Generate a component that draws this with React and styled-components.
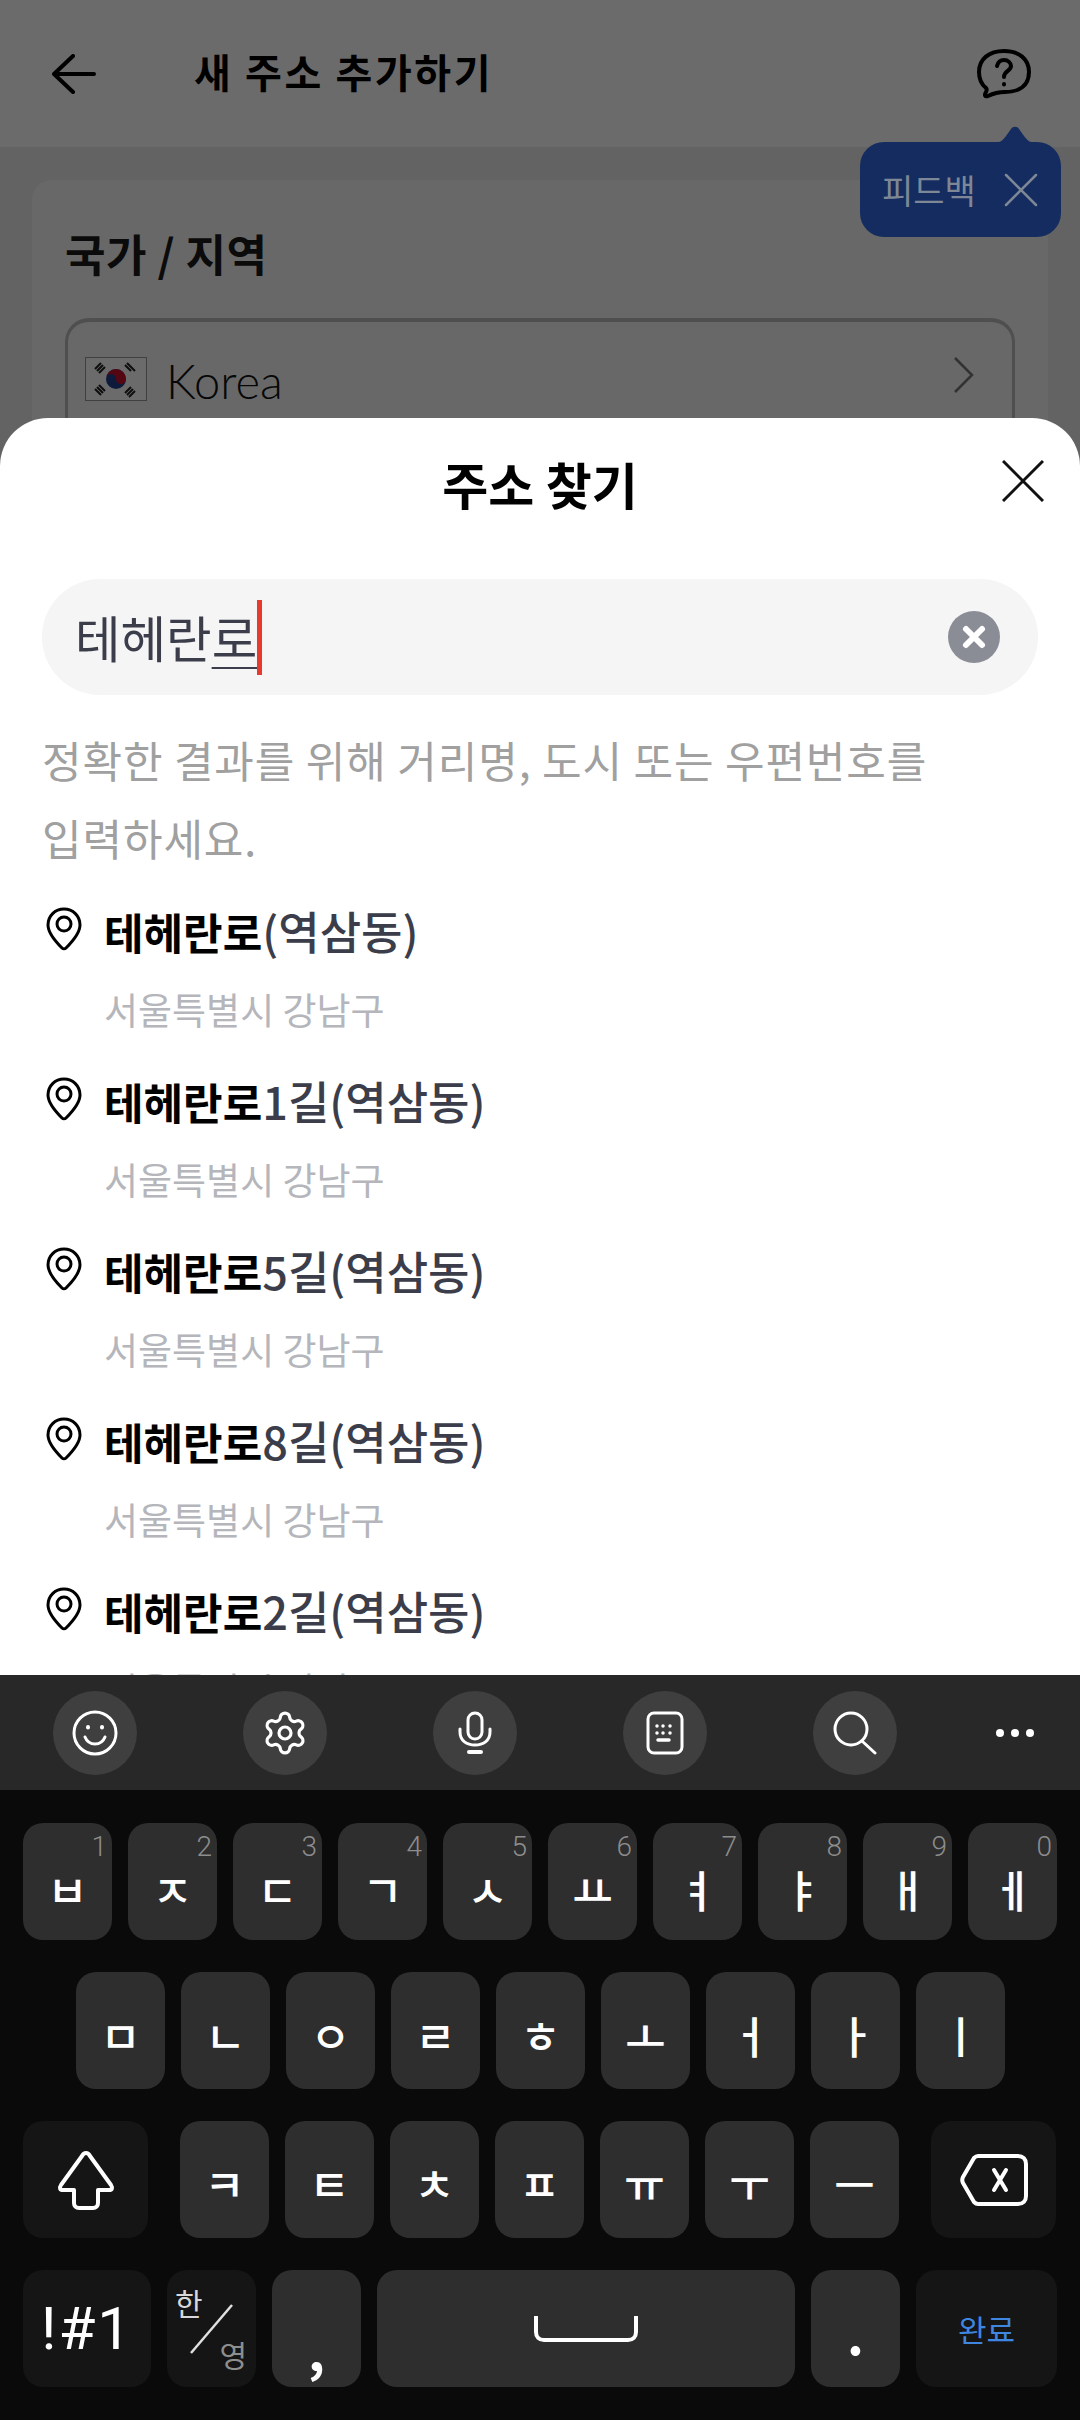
import React from "react";
import styled, { createGlobalStyle } from "styled-components";
import { Settings } from "lucide-react";

const Global = createGlobalStyle`
  html, body { margin: 0; padding: 0; background: #0a0a0a; }
  * { box-sizing: border-box; }
  body { font-family: "Noto Sans CJK KR", "Noto Sans", sans-serif; }
`;

const Screen = styled.div`
  position: relative;
  width: 1080px;
  height: 2420px;
  overflow: hidden;
  background: #ececec;
`;

/* page behind the sheet */
const TopBar = styled.header`
  height: 147px;
  background: #fff;
  display: flex;
  align-items: center;
  padding: 0 48px 0 52px;
`;
const BarTitle = styled.h1`
  margin: -6px 0 0 98px;
  flex: 1;
  font-size: 40px;
  font-weight: 700;
  color: #000;
  letter-spacing: 2.6px;
`;
const Card = styled.section`
  margin: 33px 32px 0;
  height: 600px;
  background: #f8f8f8;
  border-radius: 20px;
  padding: 40px 33px;
`;
const CardTitle = styled.h2`
  margin: 0;
  font-size: 44px;
  line-height: 66px;
  font-weight: 700;
  color: #1b1b1b;
  letter-spacing: 0.5px;
`;
const CountryBox = styled.div`
  margin-top: 32px;
  height: 130px;
  border: 3px solid #bcbcbc;
  border-top-width: 4px;
  border-radius: 24px;
  display: flex;
  align-items: flex-start;
  padding: 35px 38px 0 17px;
  gap: 19px;
`;
const CountryName = styled.span`
  flex: 1;
  font-family: "Lato", sans-serif;
  font-weight: 300;
  font-size: 47px;
  line-height: 48px;
  color: #111;
`;
const Scrim = styled.div`
  position: absolute;
  inset: 0;
  background: rgba(0, 0, 0, 0.58);
`;

const Tooltip = styled.div`
  position: absolute;
  left: 860px;
  top: 142px;
  width: 201px;
  height: 95px;
  background: #142c5f;
  border-radius: 24px;
  display: flex;
  align-items: center;
  padding: 0 23px 0 22px;
  justify-content: space-between;
  color: #7d8796;
  font-size: 34px;
`;
const TooltipTip = styled.svg`
  position: absolute;
  left: 132px;
  top: -17px;
`;

/* bottom sheet + keyboard */
const Overlay = styled.div`
  position: absolute;
  inset: 418px 0 0 0;
  display: flex;
  flex-direction: column;
`;
const Sheet = styled.div`
  flex: 1;
  min-height: 0;
  overflow: hidden;
  background: #fff;
  border-radius: 48px 48px 0 0;
`;
const SheetHead = styled.div`
  height: 138px;
  display: grid;
  grid-template-columns: 1fr auto 1fr;
  align-items: center;
  padding: 0 36px;
`;
const SheetTitle = styled.div`
  grid-column: 2;
  font-size: 50px;
  font-weight: 700;
  color: #000;
  margin-top: -8px;
`;
const CloseIcon = styled.svg`
  justify-self: end;
  margin-top: -12px;
`;
const SearchBox = styled.div`
  margin: 23px 42px 0;
  height: 116px;
  border-radius: 58px;
  background: #f5f5f5;
  display: flex;
  align-items: center;
  padding: 0 38px 0 33px;
`;
const SearchText = styled.span`
  font-size: 49.500px;
  line-height: 60px;
  color: #3b3e4a;
`;
const Composing = styled.span`
  text-decoration: underline;
  text-decoration-thickness: 2px;
  text-underline-offset: 9px;
`;
const Caret = styled.i`
  width: 5px;
  height: 75px;
  background: #e8392f;
  flex: none;
`;
const ClearBtn = styled.svg`
  margin-left: auto;
`;
const Hint = styled.p`
  margin: 25px 42px 0;
  font-size: 43px;
  line-height: 78px;
  color: #a0a0a0;
  letter-spacing: 0.900px;
`;
const Results = styled.ul`
  list-style: none;
  margin: 25px 0 0;
  padding: 0 0 0 46px;
`;
const ResultRow = styled.li`
  display: grid;
  grid-template-columns: 58px 1fr;
  grid-template-rows: 60px 60px;
  row-gap: 19px;
  height: 170px;
`;
const Pin = styled.svg`
  margin-top: 6px;
`;
const ResultName = styled.div`
  font-size: 45px;
  line-height: 60px;
  font-weight: 500;
  color: #3b3e4a;
  white-space: nowrap;
  b {
    font-size: 43px;
    color: #000;
    font-weight: 700;
  }
`;
const ResultArea = styled.div`
  grid-column: 2;
  font-size: 37px;
  line-height: 58px;
  color: #b5b6bb;
`;

const Keyboard = styled.div`
  flex: none;
  height: 745px;
  background: #0a0a0a;
`;
const ToolRow = styled.div`
  height: 115px;
  background: #282828;
  display: flex;
  align-items: center;
  padding: 0 0 0 53px;
  gap: 106px;
`;
const ToolBtn = styled.div`
  flex: none;
  width: 84px;
  height: 84px;
  margin-left: ${({ $plain }) => ($plain ? "-30px" : "0")};
  border-radius: 50%;
  background: ${({ $plain }) => ($plain ? "transparent" : "#3f3f3f")};
  display: flex;
  align-items: center;
  justify-content: center;
  color: #fff;
`;
const KeyArea = styled.div`
  padding-top: 33px;
  display: flex;
  flex-direction: column;
  gap: 32px;
`;
const KeyRow = styled.div`
  display: flex;
  gap: 16px;
  padding-left: ${({ $inset }) => $inset}px;
`;
const Key = styled.div`
  position: relative;
  flex: none;
  width: ${({ $w }) => $w || 89}px;
  height: 117px;
  margin-left: ${({ $ml }) => $ml || 0}px;
  border-radius: 20px;
  background: ${({ $dark }) => ($dark ? "#151515" : "#2e2e2e")};
  color: ${({ $color }) => $color || "#fff"};
  display: flex;
  align-items: center;
  justify-content: center;
  font-size: ${({ $size }) => $size || 44}px;
  font-weight: ${({ $size }) => ($size ? 400 : 500)};
  padding-top: ${({ $pt }) => $pt || 0}px;
`;
const Digit = styled.span`
  position: absolute;
  top: 8px;
  right: 5px;
  font-family: "Roboto", sans-serif;
  font-weight: 300;
  font-size: 28px;
  line-height: 32px;
  color: #8d8d8d;
`;
const SymbolLabel = styled.span`
  font-family: "Roboto", sans-serif;
  letter-spacing: 2px;
`;
const HanLabel = styled.span`
  position: absolute;
  left: 8px;
  top: 15px;
  font-size: 30px;
  line-height: 34px;
  font-weight: 400;
  color: #d8d8d8;
`;
const EngLabel = styled.span`
  position: absolute;
  right: 9px;
  bottom: 16px;
  font-size: 30px;
  line-height: 34px;
  font-weight: 400;
  color: #8e8e8e;
`;
const HanSlash = styled.svg`
  position: absolute;
  left: 22px;
  top: 34px;
`;

const rowOne = [
  ["ㅂ", "1"], ["ㅈ", "2"], ["ㄷ", "3"], ["ㄱ", "4"], ["ㅅ", "5"],
  ["ㅛ", "6"], ["ㅕ", "7"], ["ㅑ", "8"], ["ㅐ", "9"], ["ㅔ", "0"],
];
const rowTwo = ["ㅁ", "ㄴ", "ㅇ", "ㄹ", "ㅎ", "ㅗ", "ㅓ", "ㅏ", "ㅣ"];
const rowThree = ["ㅋ", "ㅌ", "ㅊ", "ㅍ", "ㅠ", "ㅜ", "ㅡ"];
const results = ["(역삼동)", "1길(역삼동)", "5길(역삼동)", "8길(역삼동)", "2길(역삼동)"];

function App() {
  return (
    <Screen>
      <Global />
      <TopBar>
        <svg width="44" height="40" viewBox="0 0 44 40" fill="none" stroke="#000" strokeWidth="4" strokeLinecap="round" strokeLinejoin="round">
          <path d="M21 2 2 20l19 18M3 20h39" />
        </svg>
        <BarTitle>새 주소 추가하기</BarTitle>
        <svg width="56" height="52" viewBox="0 0 56 52" fill="none" stroke="#000" strokeWidth="4" strokeLinecap="round" strokeLinejoin="round">
          <path d="M28 3c15 0 25 8 25 21 0 14-10 20-24 20-5 0-11 1-17 4-3 1-4-1-2-4 1-2 1-3 0-4C5 36 3 31 3 24 3 11 13 3 28 3Z" />
          <path d="M21 18c1-4 4-6 7-6 4 0 7 3 7 6 0 5-7 5-7 11" />
          <path d="M28 36v.5" />
        </svg>
      </TopBar>
      <Card>
        <CardTitle>국가 / 지역</CardTitle>
        <CountryBox>
          <svg width="62" height="44" viewBox="0 0 62 44">
            <rect x="0.5" y="0.5" width="61" height="43" fill="#fff" stroke="#999" />
            <circle cx="31" cy="22" r="10" fill="#1f3f8f" />
            <path d="M21 22a10 10 0 0 1 20 0c0 3-2.500 5-5 5s-5-2-5-5-2.500-5-5-5-5 2-5 5Z" fill="#c8102e" />
            <g stroke="#222" strokeWidth="2">
              <path d="M10 12 16 6M12 14 18 8M14 16 20 10" />
              <path d="M42 6 48 12M44 8 50 14M40 8 46 14" />
              <path d="M10 32 16 38M12 30 18 36M14 28 20 34" />
              <path d="M42 38 48 32M44 40 50 34M40 36 46 30" />
            </g>
          </svg>
          <CountryName>Korea</CountryName>
          <svg width="20" height="36" viewBox="0 0 20 36" fill="none" stroke="#777" strokeWidth="2.500">
            <path d="M1 1 18 18 1 35" />
          </svg>
        </CountryBox>
      </Card>
      <Scrim />
      <Tooltip>
        <TooltipTip width="46" height="18" viewBox="0 0 46 18">
          <path d="M0 18c8 0 10-2 14-7l5-7c2-3 6-3 8 0l5 7c4 5 6 7 14 7Z" fill="#142c5f" />
        </TooltipTip>
        <span>피드백</span>
        <svg width="34" height="34" viewBox="0 0 34 34" fill="none" stroke="#7d8796" strokeWidth="2.500" strokeLinecap="round">
          <path d="M2 2 32 32M32 2 2 32" />
        </svg>
      </Tooltip>
      <Overlay>
        <Sheet>
          <SheetHead>
            <SheetTitle>주소 찾기</SheetTitle>
            <CloseIcon width="42" height="42" viewBox="0 0 42 42" fill="none" stroke="#111" strokeWidth="3">
              <path d="M1 1 41 41M41 1 1 41" />
            </CloseIcon>
          </SheetHead>
          <SearchBox>
            <SearchText>
              테헤란<Composing>로</Composing>
            </SearchText>
            <Caret />
            <ClearBtn width="52" height="52" viewBox="0 0 52 52" fill="none">
              <circle cx="26" cy="26" r="26" fill="#8b8d96" />
              <path d="M18 18 34 34M34 18 18 34" stroke="#fff" strokeWidth="6" strokeLinecap="round" />
            </ClearBtn>
          </SearchBox>
          <Hint>
            정확한 결과를 위해 거리명, 도시 또는 우편번호를
            <br />
            입력하세요.
          </Hint>
          <Results>
            {results.map((rest) => (
              <ResultRow key={rest}>
                <Pin width="36" height="44" viewBox="0 0 36 44" fill="none" stroke="#000" strokeWidth="3" strokeLinejoin="round">
                  <path d="M18 2C9 2 2 9 2 18c0 9 9 18 14 23 1 1 3 1 4 0 5-5 14-14 14-23C34 9 27 2 18 2Z" />
                  <circle cx="18" cy="17" r="7" />
                </Pin>
                <ResultName>
                  <b>테헤란로</b>
                  {rest}
                </ResultName>
                <ResultArea>서울특별시 강남구</ResultArea>
              </ResultRow>
            ))}
          </Results>
        </Sheet>
        <Keyboard>
          <ToolRow>
            <ToolBtn>
              <svg width="46" height="46" viewBox="0 0 46 46" fill="none" stroke="currentColor" strokeWidth="3" strokeLinecap="round">
                <circle cx="23" cy="23" r="21" />
                <path d="M13 27c2 5 6 7 10 7s8-2 10-7" />
                <path d="M16 17v.5M30 17v.5" strokeWidth="4" />
              </svg>
            </ToolBtn>
            <ToolBtn>
              <Settings size={48} strokeWidth={1.6} />
            </ToolBtn>
            <ToolBtn>
              <svg width="34" height="44" viewBox="0 0 34 44" fill="none" stroke="currentColor" strokeWidth="3" strokeLinecap="round">
                <rect x="10" y="2" width="14" height="26" rx="7" />
                <path d="M2 18v3c0 9 7 13 15 13s15-4 15-13v-3" />
                <path d="M11 41h12" strokeWidth="4" />
              </svg>
            </ToolBtn>
            <ToolBtn>
              <svg width="38" height="44" viewBox="0 0 38 44" fill="none" stroke="currentColor" strokeWidth="3">
                <rect x="2" y="2" width="34" height="40" rx="6" />
                <path d="M11 15h.01M17 15h.01M24 15h.01M11 22h.01M17 22h.01M24 22h.01" strokeWidth="3.500" strokeLinecap="round" />
                <path d="M12 29h11" strokeWidth="3.500" strokeLinecap="round" />
              </svg>
            </ToolBtn>
            <ToolBtn>
              <svg width="44" height="44" viewBox="0 0 44 44" fill="none" stroke="currentColor" strokeWidth="3" strokeLinecap="round">
                <circle cx="18" cy="18" r="16" />
                <path d="M29 30 42 42" />
              </svg>
            </ToolBtn>
            <ToolBtn $plain>
              <svg width="40" height="10" viewBox="0 0 40 10" fill="currentColor">
                <circle cx="5" cy="5" r="4" />
                <circle cx="20" cy="5" r="4" />
                <circle cx="35" cy="5" r="4" />
              </svg>
            </ToolBtn>
          </ToolRow>
          <KeyArea>
            <KeyRow $inset={23}>
              {rowOne.map(([jamo, digit]) => (
                <Key key={jamo} $pt={14}>
                  {jamo}
                  <Digit>{digit}</Digit>
                </Key>
              ))}
            </KeyRow>
            <KeyRow $inset={76}>
              {rowTwo.map((jamo) => (
                <Key key={jamo} $pt={8}>{jamo}</Key>
              ))}
            </KeyRow>
            <KeyRow $inset={23}>
              <Key $w={125} $dark>
                <svg width="58" height="60" viewBox="0 0 58 60" fill="none" stroke="#fff" strokeWidth="4" strokeLinejoin="round">
                  <path d="M29 3c2 0 3 1 4 3l21 29c2 3 1 5-2 5H41v13c0 3-2 5-5 5H22c-3 0-5-2-5-5V40H6c-3 0-4-2-2-5L25 6c1-2 2-3 4-3Z" />
                </svg>
              </Key>
              <Key $ml={16} $pt={6}>{rowThree[0]}</Key>
              {rowThree.slice(1).map((jamo) => (
                <Key key={jamo} $pt={6}>{jamo}</Key>
              ))}
              <Key $w={125} $ml={16} $dark>
                <svg width="68" height="52" viewBox="0 0 68 52" fill="none" stroke="#fff" strokeWidth="4" strokeLinejoin="round" strokeLinecap="round">
                  <path d="M18 2h40c5 0 8 3 8 8v32c0 5-3 8-8 8H18c-2 0-3-1-4-2L3 29c-1-2-1-4 0-6L14 4c1-1 2-2 4-2Z" />
                  <path d="M34 16 46 36M46 16 34 36" strokeWidth="4" />
                </svg>
              </Key>
            </KeyRow>
            <KeyRow $inset={23}>
              <Key $w={128} $dark $size={60}>
                <SymbolLabel>!#1</SymbolLabel>
              </Key>
              <Key $dark>
                <HanLabel>한</HanLabel>
                <HanSlash width="44" height="50" viewBox="0 0 44 50" fill="none" stroke="#e0e0e0" strokeWidth="2.500">
                  <path d="M43 1 2 49" />
                </HanSlash>
                <EngLabel>영</EngLabel>
              </Key>
              <Key $size={52} $pt={40}><b>,</b></Key>
              <Key $w={418}>
                <svg width="104" height="26" viewBox="0 0 104 26" fill="none" stroke="#fff" strokeWidth="4" strokeLinecap="round">
                  <path d="M2 1v15c0 5 3 8 8 8h84c5 0 8-3 8-8V1" />
                </svg>
              </Key>
              <Key $size={52} $pt={8}><b>.</b></Key>
              <Key $w={141} $dark $size={31} $color="#3f86e0">완료</Key>
            </KeyRow>
          </KeyArea>
        </Keyboard>
      </Overlay>
    </Screen>
  );
}

export default App;
